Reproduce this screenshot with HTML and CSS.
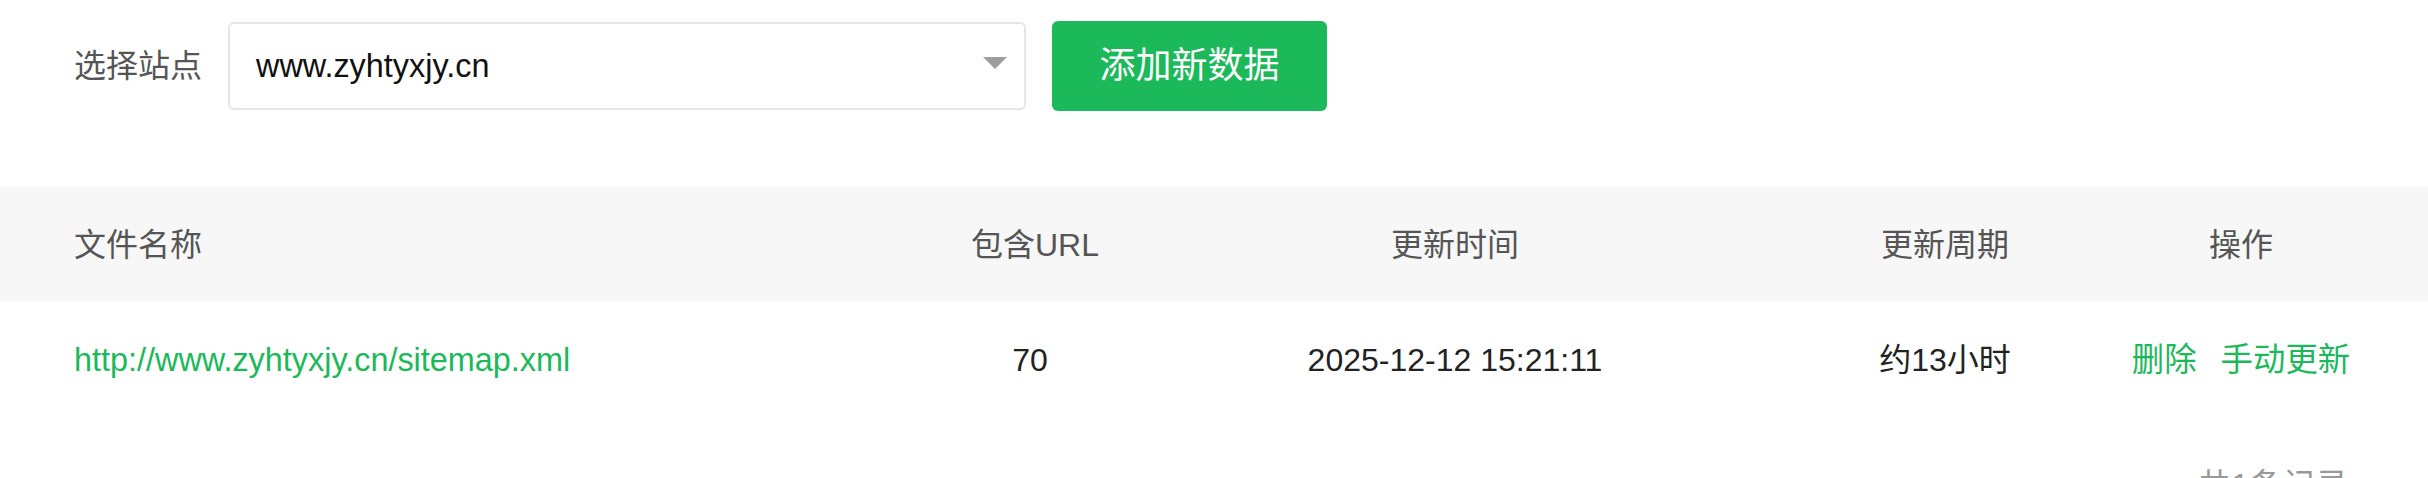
FILE: index.html
```html
<!DOCTYPE html>
<html lang="zh-CN">
<head>
<meta charset="utf-8">
<title>Sitemap</title>
<link rel="stylesheet" href="styles.css">
</head>
<body>
<div class="page">
  <div class="toolbar">
    <span class="toolbar-label">选择站点</span>
    <div class="site-select">
      <span class="site-select-value">www.zyhtyxjy.cn</span>
      <span class="site-select-caret"></span>
    </div>
    <button class="btn-primary" type="button">添加新数据</button>
  </div>

  <div class="table">
    <div class="table-row table-head">
      <div class="cell cell-name">文件名称</div>
      <div class="cell cell-center cell-url-head">包含URL</div>
      <div class="cell cell-center">更新时间</div>
      <div class="cell cell-center">更新周期</div>
      <div class="cell cell-center">操作</div>
    </div>
    <div class="table-row table-body">
      <div class="cell cell-name"><a class="link" href="#">http://www.zyhtyxjy.cn/sitemap.xml</a></div>
      <div class="cell cell-center">70</div>
      <div class="cell cell-center">2025-12-12 15:21:11</div>
      <div class="cell cell-center">约13小时</div>
      <div class="cell cell-center cell-actions">
        <a class="link" href="#">删除</a>
        <a class="link" href="#">手动更新</a>
      </div>
    </div>
  </div>

  <div class="pager">共1条记录</div>
</div>
</body>
</html>
```

FILE: styles.css
```css
html, body {
  margin: 0;
  padding: 0;
  background: #ffffff;
}

body {
  font-family: "Liberation Sans", Arial, "Noto Sans CJK SC", sans-serif;
  font-size: 32px;
  color: #222222;
}

.page {
  width: 2428px;
}

.toolbar {
  display: flex;
  align-items: center;
  padding: 21px 0 0 74px;
  height: 90px;
}

.toolbar-label {
  color: #555555;
  font-size: 32px;
  line-height: 32px;
  margin-right: 26px;
}

.site-select {
  box-sizing: border-box;
  width: 798px;
  height: 88px;
  border: 2px solid #e6e6e6;
  border-radius: 6px;
  display: flex;
  align-items: center;
  justify-content: space-between;
  padding: 0 17px 0 26px;
  background: #ffffff;
}

.site-select-value {
  color: #111111;
  font-size: 32.4px;
  line-height: 32px;
}

.site-select-caret {
  width: 0;
  height: 0;
  border-left: 12px solid transparent;
  border-right: 12px solid transparent;
  border-top: 12px solid #9e9e9e;
  margin-top: -6px;
}

.btn-primary {
  box-sizing: border-box;
  margin-left: 26px;
  width: 275px;
  height: 90px;
  border: none;
  border-radius: 6px;
  background: #1bb95a;
  color: #ffffff;
  font-family: "Liberation Sans", Arial, "Noto Sans CJK SC", sans-serif;
  font-size: 36px;
  line-height: 36px;
  padding: 0;
  cursor: pointer;
}

.table {
  margin-top: 76px;
}

.table-row {
  display: grid;
  grid-template-columns: 920px 220px 630px 350px 242px;
  padding-right: 66px;
  height: 115px;
  align-items: center;
}

.table-head {
  background: #f7f7f7;
  color: #555555;
}

.table-body {
  color: #222222;
}

.cell {
  font-size: 32px;
  line-height: 32px;
  white-space: nowrap;
}

.cell-name {
  padding-left: 74px;
}

.cell-center {
  text-align: center;
}

.cell-url-head {
  padding-left: 10px;
}

.cell-actions {
  display: flex;
  justify-content: center;
  gap: 24px;
}

.link {
  color: #1bb95a;
  text-decoration: none;
  font-size: 32.4px;
}

.pager {
  margin-top: 52px;
  padding-right: 79px;
  text-align: right;
  color: #999999;
  font-size: 32px;
  line-height: 32px;
  letter-spacing: 1px;
}
```
